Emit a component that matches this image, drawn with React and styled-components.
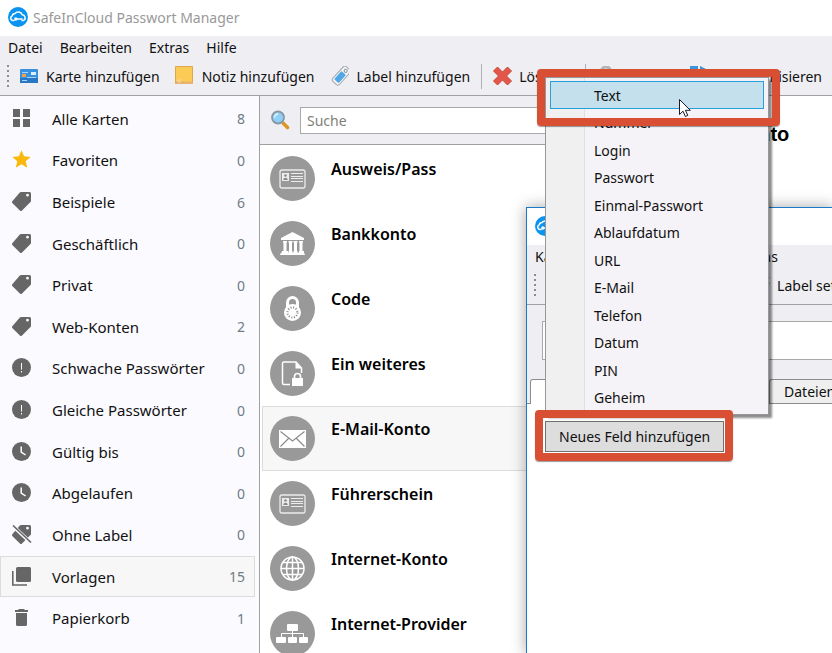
import { useState } from 'react'
import styled, { createGlobalStyle, css } from 'styled-components'

const LABELS = [
    { name: 'Alle Karten', count: 8, icon: 'grid' },
    { name: 'Favoriten', count: 0, icon: 'star' },
    { name: 'Beispiele', count: 6, icon: 'tag' },
    { name: 'Geschäftlich', count: 0, icon: 'tag' },
    { name: 'Privat', count: 0, icon: 'tag' },
    { name: 'Web-Konten', count: 2, icon: 'tag' },
    { name: 'Schwache Passwörter', count: 0, icon: 'alert' },
    { name: 'Gleiche Passwörter', count: 0, icon: 'alert' },
    { name: 'Gültig bis', count: 0, icon: 'clock' },
    { name: 'Abgelaufen', count: 0, icon: 'clock' },
    { name: 'Ohne Label', count: 0, icon: 'tagOff' },
    { name: 'Vorlagen', count: 15, icon: 'copies' },
    { name: 'Papierkorb', count: 1, icon: 'trash' },
]

const CARDS = [
    { name: 'Ausweis/Pass', icon: 'idCard' },
    { name: 'Bankkonto', icon: 'bank' },
    { name: 'Code', icon: 'padlock' },
    { name: 'Ein weiteres', icon: 'file' },
    { name: 'E-Mail-Konto', icon: 'mail' },
    { name: 'Führerschein', icon: 'idCard' },
    { name: 'Internet-Konto', icon: 'globe' },
    { name: 'Internet-Provider', icon: 'network' },
]

const FIELD_TYPES = [
    'Text', 'Nummer', 'Login', 'Passwort', 'Einmal-Passwort', 'Ablaufdatum',
    'URL', 'E-Mail', 'Telefon', 'Datum', 'PIN', 'Geheim',
]

const TAG = 'M9.200 0H17.500A1.500 1.500 0 0 1 19 1.500V8.700Q19 9.400 18.500 9.900L10 18.500A1.500 1.500 0 0 1 7.900 18.500L.5 11.200A1.500 1.500 0 0 1 .5 9.100L7.800 .6Q8.400 0 9.200 0zM15.500 1.800a1.400 1.400 0 1 0 0 2.800 1.400 1.400 0 0 0 0-2.800z'

const LABEL_SHAPES = {
    grid: <path d="M1 0h7v8H1zM11 0h7v8h-7zM1 10h7v8H1zM11 10h7v8h-7z" />,
    star: <path fill="#fbb80c" d="M9.500 .3l2.600 6 6.500.6-4.900 4.300 1.500 6.500-5.700-3.400-5.700 3.400 1.500-6.500L.4 6.900l6.500-.6z" />,
    tag: <path fillRule="evenodd" d={TAG} />,
    alert: (
        <>
            <circle cx="9.500" cy="9.500" r="9.500" />
            <path fill="#fff" d="M9 5h1v6.500H9zM9 13h1v1.500H9z" />
        </>
    ),
    clock: (
        <>
            <circle cx="9.500" cy="9.500" r="9.500" />
            <path fill="none" stroke="#fff" strokeWidth="1.500" d="M9.200 4.500V10l4.400 3" />
        </>
    ),
    tagOff: (
        <>
            <path fillRule="evenodd" d={TAG} />
            <path stroke="#fbfaff" strokeWidth="3.600" d="M1 1l18 17" />
            <path stroke="#666" strokeWidth="1.600" d="M1 .5l18 17" />
        </>
    ),
    copies: (
        <>
            <rect x="4" y="0" width="15" height="15" rx="1.500" />
            <path fill="none" stroke="#666" strokeWidth="1.600" d="M.8 4v14h14.200" />
        </>
    ),
    trash: <path d="M7 1h5l1 1h3v2H3V2h3zM4 5h11v11.500a1.500 1.500 0 0 1-1.500 1.500h-8A1.500 1.500 0 0 1 4 16.500z" />,
}

const CARD_SHAPES = {
    idCard: (
        <>
            <rect x="10" y="14" width="25" height="18" rx="2" fill="none" stroke="#ececec" strokeWidth="1.300" />
            <rect x="12" y="17" width="7" height="8" fill="#ececec" />
            <circle cx="15.500" cy="19.500" r="1.300" fill="#888" />
            <path d="M13.300 24c0-3 4.400-3 4.400 0z" fill="#888" />
            <path stroke="#ececec" d="M21 17.500h12M21 20.500h12M21 22.500h12M21 25.500h12" />
        </>
    ),
    bank: <path fill="#fff" d="M22.500 11L34 17v2H11v-2zM13 20h4v1.500h-.5V30h1.500v1.500H12V30h1.500v-8.500H13zM18.500 20h4v1.500H22V30h.500v1.500h-4V30h.500v-8.500h-.500zM23.500 20h4v1.500H27V30h.500v1.500h-4V30h.500v-8.500h-.500zM29 20h4v1.500h-.500V30H34v1.500h-5V30h.500v-8.500H29zM11 31.500h23l1 2.500H10z" />,
    padlock: (
        <>
            <path fill="none" stroke="#fff" strokeWidth="3" d="M17.500 22v-5.500a5 5 0 0 1 10 0V22" />
            <circle cx="22.500" cy="26.500" r="8.500" fill="#fff" />
            <circle cx="22.500" cy="26.500" r="5" fill="none" stroke="#888" strokeWidth="2" strokeDasharray="1 1.620" />
        </>
    ),
    file: (
        <>
            <path fill="none" stroke="#fff" strokeWidth="1.500" d="M20 33.500h-6a1.500 1.500 0 0 1-1.500-1.500V12.500A1.500 1.500 0 0 1 14 11h12l5.500 6v5" />
            <path fill="#fff" d="M25.500 11l6 6.500h-6zM22 27h11v8H22z" />
            <path fill="none" stroke="#fff" strokeWidth="1.700" d="M24.500 27v-1.500a3 3 0 0 1 6 0V27" />
        </>
    ),
    mail: (
        <>
            <path fill="#fff" d="M9 14h27v18H9z" />
            <path fill="none" stroke="#8c8c8c" strokeWidth="1.200" d="M10.500 15.500l12 9.500 12-9.500M10.500 30.500l8.500-8.500M34.500 30.500L26 22" />
        </>
    ),
    globe: (
        <g fill="none" stroke="#fff" strokeWidth="1.500">
            <circle cx="22.500" cy="22.500" r="11.500" />
            <ellipse cx="22.500" cy="22.500" rx="6" ry="11.500" />
            <path d="M22.500 11v23M11 22.500h23M13 16.500h19M13 28.500h19" />
        </g>
    ),
    network: (
        <>
            <rect x="17" y="13" width="11" height="7" rx="1" fill="#fff" />
            <path fill="none" stroke="#fff" d="M22.500 20v6M11.500 26v-3.500h22V26" />
            <rect x="6" y="26" width="10" height="6" rx="1" fill="#fff" />
            <rect x="18" y="26" width="9" height="6" rx="1" fill="#fff" />
            <rect x="29" y="26" width="9" height="6" rx="1" fill="#fff" />
        </>
    ),
}

const TOOL_SHAPES = {
    card: (
        <>
            <rect x="1" y="3" width="18" height="14" rx="1" fill="#3791de" />
            <path fill="#2877c4" d="M1 12h18v5H1z" />
            <rect x="3" y="8" width="4" height="3" fill="#f0a04b" />
            <rect x="12" y="6" width="5" height="3" fill="#dbeeff" />
            <path stroke="#a9d4fa" d="M3 6.500h6M8 11.500h9M3 14.500h5" />
        </>
    ),
    note: (
        <>
            <path fill="#fbcb55" stroke="#dda74b" d="M.5 .5h17v17H.5z" />
            <path fill="#e8b273" d="M1 15l5 .5V18H1zM6 15.500h12V18H6z" />
            <path fill="#f8d48c" d="M1 14l5-1-1 4.500z" />
        </>
    ),
    label: (
        <g transform="translate(2 0) rotate(42 10 10)">
            <rect x="5.500" y="-.5" width="9" height="20" rx="2.500" fill="#f1f3f5" stroke="#a3a8ad" />
            <rect x="7" y="6" width="6" height="11" rx="1" fill="#4fa7e8" />
            <circle cx="10" cy="3" r="1.500" fill="#fff" stroke="#8d9298" />
        </g>
    ),
    remove: <path fill="#e2574a" stroke="#c9473b" strokeLinejoin="round" d="M5.500 1l5 5 5-5 4 4-5 5 5 5-4 4-5-5-5 5-4-4 5-5-5-5z" />,
    lock: (
        <>
            <path fill="none" stroke="#b4b4b4" strokeWidth="3" d="M5 10V6a5 5 0 0 1 10 0v4" />
            <rect x="2" y="9" width="16" height="11" rx="1" fill="#e0a83a" />
        </>
    ),
    sync: <path fill="#3d94db" d="M0 0h8v3H4v8H0zM10 0l6 3v6h-4V4h-2zM3 13h12v4H3z" />,
    search: (
        <>
            <path stroke="#dd9424" strokeWidth="3.600" strokeLinecap="round" d="M13.500 13.500l4 4" />
            <circle cx="8" cy="7.500" r="6" fill="#8fd0f8" stroke="#8a97a3" strokeWidth="1.800" />
            <path fill="none" stroke="#d8f1ff" strokeWidth="1.800" d="M4.500 7.500a3.500 3.500 0 0 1 3.500-3.500" />
        </>
    ),
}

function CloudLogo() {
    return (
        <Logo viewBox="0 0 20 20" aria-hidden="true">
            <circle cx="10" cy="10" r="10" fill="#0a93ef" />
            <path
                fill="none"
                stroke="#fff"
                strokeWidth="1.500"
                strokeLinecap="round"
                strokeLinejoin="round"
                d="M6 13.500H4.800a2.400 2.400 0 0 1-.6-4.600A3 3 0 0 1 7 6.500a4.200 4.200 0 0 1 7.200 1.300 3 3 0 0 1 1.400 5.600L14 13.500"
            />
            <path stroke="#fff" strokeWidth="1.500" strokeLinecap="round" d="M8 12h6" />
            <circle cx="7.800" cy="12" r="1.700" fill="#fff" />
        </Logo>
    )
}

function Tool({ icon, children }) {
    return (
        <ToolButton type="button">
            <ToolIcon viewBox="0 0 20 20" aria-hidden="true">{TOOL_SHAPES[icon]}</ToolIcon>
            {children}
        </ToolButton>
    )
}

function Grip() {
    return (
        <GripDots viewBox="0 0 3 22" aria-hidden="true">
            <path stroke="#8c8c90" strokeWidth="2" strokeDasharray="2 3" d="M1 0v22" />
        </GripDots>
    )
}

export default function App() {

    const [label, setLabel] = useState('Vorlagen')
    const [card, setCard] = useState('E-Mail-Konto')
    const [search, setSearch] = useState('')
    const [fieldType, setFieldType] = useState('Text')

    return (
        <Desktop>
            <GlobalStyle />

            <TitleBar>
                <CloudLogo />
                <h1>SafeInCloud Passwort Manager</h1>
            </TitleBar>

            <MenuBar>
                <button type="button">Datei</button>
                <button type="button">Bearbeiten</button>
                <button type="button">Extras</button>
                <button type="button">Hilfe</button>
            </MenuBar>

            <ToolBar>
                <Grip />
                <Tool icon="card">Karte hinzufügen</Tool>
                <Tool icon="note">Notiz hinzufügen</Tool>
                <Tool icon="label">Label hinzufügen</Tool>
                <Separator />
                <Tool icon="remove">Löschen</Tool>
                <Separator />
                <Tool icon="lock">Sperren</Tool>
                <Tool icon="sync">Synchronisieren</Tool>
            </ToolBar>

            <Panes>
                <Sidebar>
                    {LABELS.map((item) => (
                        <LabelRow
                            key={item.name}
                            type="button"
                            $active={item.name === label}
                            onClick={() => setLabel(item.name)}
                        >
                            <LabelIcon viewBox="0 0 20 20" aria-hidden="true">{LABEL_SHAPES[item.icon]}</LabelIcon>
                            <span>{item.name}</span>
                            <Count>{item.count}</Count>
                        </LabelRow>
                    ))}
                </Sidebar>

                <CardPane>
                    <SearchBar>
                        <ToolIcon viewBox="0 0 20 20" aria-hidden="true">{TOOL_SHAPES.search}</ToolIcon>
                        <input
                            type="text"
                            aria-label="Suche"
                            placeholder="Suche"
                            value={search}
                            onChange={(e) => setSearch(e.target.value)}
                        />
                    </SearchBar>
                    <CardList>
                        {CARDS.filter((item) => item.name.toLowerCase().includes(search.toLowerCase())).map((item) => (
                            <CardRow
                                key={item.name}
                                type="button"
                                $active={item.name === card}
                                onClick={() => setCard(item.name)}
                            >
                                <CardIcon viewBox="0 0 45 45" aria-hidden="true">
                                    <circle cx="22.500" cy="22.500" r="22.500" fill="#999" />
                                    {CARD_SHAPES[item.icon]}
                                </CardIcon>
                                <span>{item.name}</span>
                            </CardRow>
                        ))}
                    </CardList>
                </CardPane>

                <Detail>
                    <h2>{card}</h2>
                </Detail>
            </Panes>

            <EditWindow>
                <TitleBar $tall>
                    <CloudLogo />
                </TitleBar>
                <MenuBar>
                    <button type="button">Karte</button>
                    <button type="button">Bearbeiten</button>
                    <button type="button">Karten</button>
                    <button type="button">Extras</button>
                </MenuBar>
                <ToolBar>
                    <Grip />
                    <Tool icon="card">Symbol</Tool>
                    <Tool icon="note">Abbrechen</Tool>
                    <Tool icon="label">Label setzen</Tool>
                </ToolBar>
                <NameField>
                    <input type="text" aria-label="Name" />
                </NameField>
                <Tabs>
                    <Tab type="button" $active>Felder</Tab>
                    <Tab type="button">Dateien</Tab>
                </Tabs>
                <Fields>
                    <AddField type="button">Neues Feld hinzufügen</AddField>
                </Fields>
            </EditWindow>

            <TypeMenu role="menu">
                {FIELD_TYPES.map((type) => (
                    <TypeItem
                        key={type}
                        type="button"
                        role="menuitem"
                        $active={type === fieldType}
                        onMouseEnter={() => setFieldType(type)}
                    >
                        {type}
                    </TypeItem>
                ))}
            </TypeMenu>

            <MenuFrame />
            <ButtonFrame />

            <Pointer viewBox="0 0 14 20" aria-hidden="true">
                <path fill="#fff" stroke="#1a1a2a" d="M1.500 1.500v15l3.500-3.300 2.400 5.300 2.400-1.100-2.400-5.100h4.900z" />
            </Pointer>
        </Desktop>
    )
}

const GlobalStyle = createGlobalStyle`
    * {
        box-sizing: border-box;
    }

    body {
        margin: 0;
        overflow: hidden;
    }

    body, button, input {
        font-family: "Noto Sans", "Open Sans", sans-serif;
        font-size: 14px;
        color: #111;
    }

    button {
        padding: 0;
        border: 0;
        background: none;
        text-align: left;
        white-space: nowrap;
    }
`

const Desktop = styled.div`
    position: relative;
    display: flex;
    flex-direction: column;
    height: 100vh;
    overflow: hidden;
    background: #fff;
`

const TitleBar = styled.header`
    flex: none;
    display: flex;
    align-items: center;
    gap: 5px;
    height: ${({ $tall }) => $tall ? 37 : 36}px;
    padding: 0 8px 2px;
    background: #fff;

    h1 {
        margin: 0;
        font-size: 14px;
        font-weight: 400;
        color: #999;
    }
`

const Logo = styled.svg`
    width: 20px;
    height: 20px;
`

const MenuBar = styled.nav`
    flex: none;
    display: flex;
    align-items: center;
    gap: 17px;
    height: 23px;
    padding-left: 8px;
    background: #efeef3;
`

const ToolBar = styled.div`
    flex: none;
    display: flex;
    align-items: center;
    height: 37px;
    padding: 0 0 2px 7px;
    border-bottom: 1px solid #a0a0a0;
    background: #efeef3;
`

const GripDots = styled.svg`
    flex: none;
    width: 3px;
    height: 22px;
    margin-right: 9px;
`

const ToolButton = styled.button`
    flex: none;
    display: flex;
    align-items: center;
    gap: 7px;
    margin-right: 15px;
`

const ToolIcon = styled.svg`
    flex: none;
    width: 20px;
    height: 20px;
`

const Separator = styled.span`
    flex: none;
    width: 1px;
    height: 25px;
    margin: 0 10px 0 -4px;
    background: #b0b0b4;
`

const Panes = styled.main`
    flex: 1;
    display: grid;
    grid-template-columns: 260px 300px 1fr;
    min-height: 0;
`

const Sidebar = styled.nav`
    display: grid;
    grid-auto-rows: 1fr;
    padding: 2px 4px 14px 0;
    border-right: 1px solid #a0a0a0;
    background: #fbfaff;
`

const LabelRow = styled.button`
    display: grid;
    grid-template-columns: 20px 1fr auto;
    align-items: center;
    column-gap: 20px;
    padding: 0 9px 0 11px;
    border: 1px solid transparent;
    font-size: 15px;

    ${({ $active }) => $active && css`
        border-color: #dcdcdc;
        background: #f7f7f8;
    `}
`

const LabelIcon = styled.svg`
    width: 20px;
    height: 20px;
    fill: #666;
`

const Count = styled.span`
    font-size: 14px;
    color: #6f7c83;
`

const CardPane = styled.section`
    display: flex;
    flex-direction: column;
    min-height: 0;
    overflow: hidden;
    border-right: 1px solid #a0a0a0;
`

const SearchBar = styled.div`
    flex: none;
    display: flex;
    align-items: center;
    gap: 10px;
    height: 49px;
    padding: 0 10px;
    border-bottom: 1px solid #a0a0a0;
    background: #efeef3;

    input {
        flex: 1;
        height: 27px;
        min-width: 0;
        padding: 0 6px;
        border: 1px solid #a9a9a9;
        background: #fff;
    }

    input::placeholder {
        color: #7f7f78;
    }
`

const CardList = styled.div`
    display: flex;
    flex-direction: column;
    padding: 1px 2px;
`

const CardRow = styled.button`
    flex: none;
    display: flex;
    gap: 16px;
    height: 65px;
    padding: 9px 7px;
    border: 1px solid transparent;
    font-size: 16px;
    font-weight: 600;
    line-height: 26px;
    color: #000;

    ${({ $active }) => $active && css`
        border-color: #dcdcdc;
        background: #f7f7f7;
    `}
`

const CardIcon = styled.svg`
    width: 45px;
    height: 45px;
`

const Detail = styled.section`
    padding: 26px 0 0 106px;

    h2 {
        margin: 0;
        font-family: "Liberation Sans", Arial, sans-serif;
        font-size: 20px;
        line-height: 24px;
        color: #000;
    }
`

const EditWindow = styled.section`
    position: absolute;
    top: 207px;
    right: -1px;
    bottom: -1px;
    left: 526px;
    display: flex;
    flex-direction: column;
    overflow: hidden;
    border: 1px solid #1979ca;
    background: #fff;
    box-shadow: 0 0 14px rgba(0, 0, 0, 0.35);
`

const NameField = styled.div`
    flex: none;
    height: 73px;
    padding: 16px 0 0 15px;
    background: #efeef3;

    input {
        width: 100%;
        height: 39px;
        border: 1px solid #a9a9a9;
        border-right: 0;
        background: #fff;
    }
`

const Tabs = styled.div`
    flex: none;
    display: flex;
    align-items: flex-end;
    height: 26px;
    padding-left: 3px;
    border-bottom: 1px solid #8c8c90;
    background: #efeef3;
`

const Tab = styled.button`
    flex: none;
    width: 120px;
    height: 24px;
    padding-left: 14px;
    border: 1px solid #8c8c90;
    border-bottom: 0;
    border-radius: 3px 3px 0 0;
    background: #efeff0;

    ${({ $active }) => $active && css`
        width: 239px;
        height: 25px;
        margin-bottom: -1px;
        background: #fff;
    `}
`

const Fields = styled.div`
    padding: 17px 18px;
`

const AddField = styled.button`
    height: 31px;
    padding: 0 13px;
    border: 1px solid #707070;
    background: #dddddd;
`

const TypeMenu = styled.div`
    position: absolute;
    top: 77px;
    left: 545px;
    display: grid;
    grid-auto-rows: 1fr;
    width: 224px;
    height: 338px;
    padding: 3px 4px;
    border: 1px solid #97979a;
    background: linear-gradient(to right, #f1f0f1 38px, #e0e0e2 38px, #e0e0e2 39px, #f5f3f7 39px);
    box-shadow: 3px 3px 2px rgba(0, 0, 0, 0.45);
`

const TypeItem = styled.button`
    padding: 1px 0 0 43px;
    border: 1px solid transparent;

    ${({ $active }) => $active && css`
        border-color: #26a0da;
        background: #c3e0ec;
    `}
`

const Frame = styled.div`
    position: absolute;
    border: 8px solid #d84f33;
    border-radius: 4px;
    box-shadow: 0 1px 1px rgba(0, 0, 0, 0.4);
    pointer-events: none;
`

const MenuFrame = styled(Frame)`
    top: 69px;
    left: 537px;
    width: 243px;
    height: 57px;
`

const ButtonFrame = styled(Frame)`
    top: 410px;
    left: 535px;
    width: 198px;
    height: 51px;
`

const Pointer = styled.svg`
    position: absolute;
    top: 98px;
    left: 678px;
    width: 14px;
    height: 20px;
    pointer-events: none;
`
